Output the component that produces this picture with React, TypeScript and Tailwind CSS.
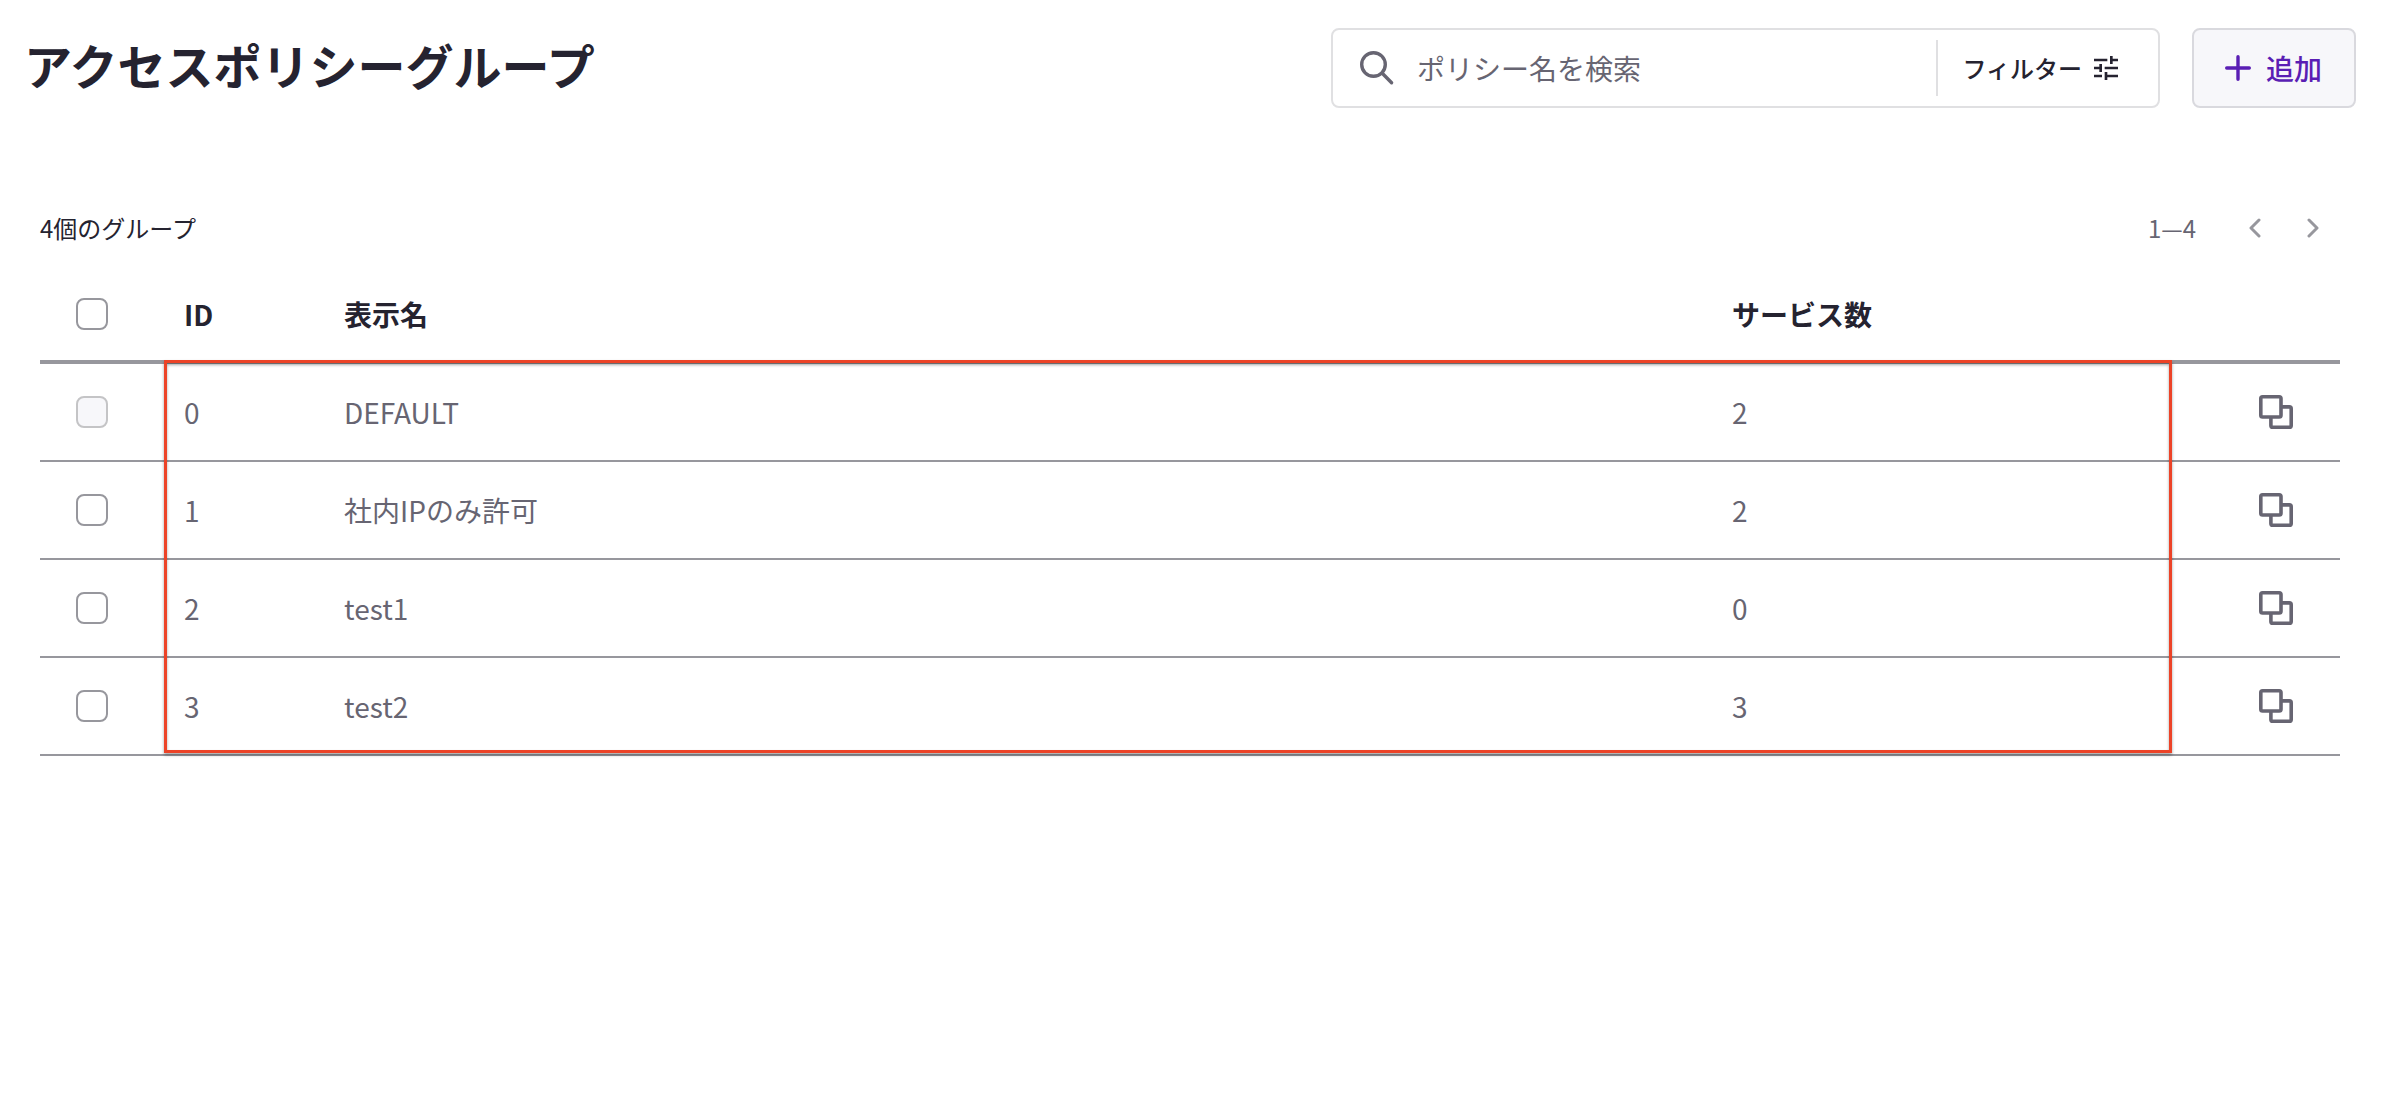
import { useState } from "react";

interface PolicyGroup {
    id: number;
    name: string;
    services: number;
    locked?: boolean;
}

const groups: PolicyGroup[] = [
    { id: 0, name: "DEFAULT", services: 2, locked: true },
    { id: 1, name: "社内IPのみ許可", services: 2 },
    { id: 2, name: "test1", services: 0 },
    { id: 3, name: "test2", services: 3 },
];

const checkboxClass =
    "block size-8 appearance-none rounded-lg border-2 border-[#97979d] bg-white checked:bg-[#5a1eb4] disabled:border-[#c4c4c6] disabled:bg-[#f7f7fa]";

function SearchIcon() {
    return (
        <svg className="size-9 shrink-0" viewBox="0 0 36 36" fill="none" stroke="currentColor" strokeWidth={3.4} strokeLinecap="round" aria-hidden="true">
            <circle cx="14.5" cy="14.5" r="11.8" />
            <path d="M23 23l9.6 9.8" />
        </svg>
    );
}

function TuneIcon() {
    return (
        <svg className="size-8 shrink-0" viewBox="0 0 24 24" fill="currentColor" aria-hidden="true">
            <path d="M3 17v2h6v-2H3zM3 5v2h10V5H3zm10 16v-2h8v-2h-8v-2h-2v6h2zM7 9v2H3v2h4v2h2V9H7zm14 4v-2H11v2h10zm-6-4h2V7h4V5h-4V3h-2v6z" />
        </svg>
    );
}

function PlusIcon() {
    return (
        <svg className="size-7 shrink-0" viewBox="0 0 28 28" fill="none" stroke="currentColor" strokeWidth={3.4} strokeLinecap="round" aria-hidden="true">
            <path d="M14 2.7v22.6M2.7 14h22.6" />
        </svg>
    );
}

function ChevronIcon({ d }: { d: string }) {
    return (
        <svg className="h-5 w-3" viewBox="0 0 12 20" fill="none" stroke="currentColor" strokeWidth={3} strokeLinecap="round" strokeLinejoin="round" aria-hidden="true">
            <path d={d} />
        </svg>
    );
}

function DuplicateIcon() {
    return (
        <svg className="size-[34px]" viewBox="0 0 34 34" fill="none" stroke="currentColor" strokeWidth={3.6} strokeLinejoin="round" aria-hidden="true">
            <rect x="1.8" y="1.8" width="20.2" height="20.2" rx="1.8" />
            <path d="M22 11.9h8.4a1.8 1.8 0 0 1 1.8 1.8v16.7a1.8 1.8 0 0 1-1.8 1.8H13.7a1.8 1.8 0 0 1-1.8-1.8V22" />
        </svg>
    );
}

function Toolbar() {
    return (
        <header className="flex items-center justify-between pt-7 pr-9 pl-6">
            <h1 className="pb-2 text-5xl font-bold">アクセスポリシーグループ</h1>
            <div className="flex items-stretch gap-8">
                <div className="flex h-20 w-[829px] items-center rounded-lg border-2 border-[#e0e0e2] bg-white pl-[26px] text-[#676572]">
                    <SearchIcon />
                    <input
                        type="search"
                        aria-label="ポリシー名を検索"
                        placeholder="ポリシー名を検索"
                        className="ml-[22px] min-w-0 flex-1 text-[28px] outline-none placeholder:text-[#676572] placeholder:opacity-100"
                    />
                    <button type="button" className="flex h-14 items-center gap-2 border-l-2 border-[#e0e0e2] pr-9 pl-6 text-2xl font-medium text-[#252330]">
                        フィルター
                        <TuneIcon />
                    </button>
                </div>
                <button type="button" className="flex h-20 items-center gap-3.5 rounded-lg border-2 border-[#d9d9de] bg-[#f7f7fa] pr-8 pl-[30px] text-[28px] font-medium text-[#5a1eb4]">
                    <PlusIcon />
                    追加
                </button>
            </div>
        </header>
    );
}

function Pager() {
    return (
        <div className="flex h-20 items-center justify-between text-2xl">
            <p>4個のグループ</p>
            <nav aria-label="ページ" className="flex items-center gap-1 text-[#676572]">
                <span className="mr-7">1—4</span>
                <button type="button" aria-label="前へ" className="flex size-[54px] items-center justify-center text-[#97979d]">
                    <ChevronIcon d="M10 2L2 10l8 8" />
                </button>
                <button type="button" aria-label="次へ" className="flex size-[54px] items-center justify-center text-[#97979d]">
                    <ChevronIcon d="M2 2l8 8-8 8" />
                </button>
            </nav>
        </div>
    );
}

export default function App() {
    const [selected, setSelected] = useState<number[]>([]);
    const selectable = groups.filter((group) => !group.locked).map((group) => group.id);

    const toggle = (id: number) => {
        setSelected((ids) => (ids.includes(id) ? ids.filter((other) => other !== id) : [...ids, id]));
    };

    return (
        <div className="min-h-screen bg-white font-['Noto_Sans_CJK_JP',sans-serif] text-[#252330]" lang="ja">
            <Toolbar />
            <main className="mt-20 pr-[52px] pl-10">
                <Pager />
                <div className="relative">
                    <table className="w-full table-fixed border-separate border-spacing-0 text-left text-[28px]">
                        <thead>
                            <tr className="*:h-24 *:border-b-4 *:border-[#97979d] *:p-0">
                                <th className="w-[124px]">
                                    <input
                                        type="checkbox"
                                        aria-label="すべて選択"
                                        className={`ml-9 ${checkboxClass}`}
                                        checked={selected.length === selectable.length}
                                        onChange={(e) => setSelected(e.target.checked ? selectable : [])}
                                    />
                                </th>
                                <th className="w-40"><span className="pl-5">ID</span></th>
                                <th><span className="pl-5">表示名</span></th>
                                <th className="w-[460px]"><span className="pl-5">サービス数</span></th>
                                <th className="w-[168px]" aria-label="操作"></th>
                            </tr>
                        </thead>
                        <tbody className="text-[#676572]">
                            {groups.map((group) => (
                                <tr key={group.id} className="*:h-[98px] *:border-b-2 *:border-[#97979d] *:p-0">
                                    <td>
                                        <input
                                            type="checkbox"
                                            aria-label={group.name}
                                            className={`ml-9 ${checkboxClass}`}
                                            disabled={group.locked}
                                            checked={selected.includes(group.id)}
                                            onChange={() => toggle(group.id)}
                                        />
                                    </td>
                                    <td><span className="pl-5">{group.id}</span></td>
                                    <td><span className="pl-5">{group.name}</span></td>
                                    <td><span className="pl-5">{group.services}</span></td>
                                    <td>
                                        <button type="button" aria-label={`${group.name}を複製`} className="ml-[87px] block">
                                            <DuplicateIcon />
                                        </button>
                                    </td>
                                </tr>
                            ))}
                        </tbody>
                    </table>
                    {/* Highlight frame over the data cells */}
                    <div className="pointer-events-none absolute top-[92px] right-[168px] bottom-[3px] left-[124px] border-3 border-[#ec4327] shadow-[0_2px_3px_rgba(0,0,0,0.35),inset_0_2px_3px_rgba(0,0,0,0.35)]" />
                </div>
            </main>
        </div>
    );
}
